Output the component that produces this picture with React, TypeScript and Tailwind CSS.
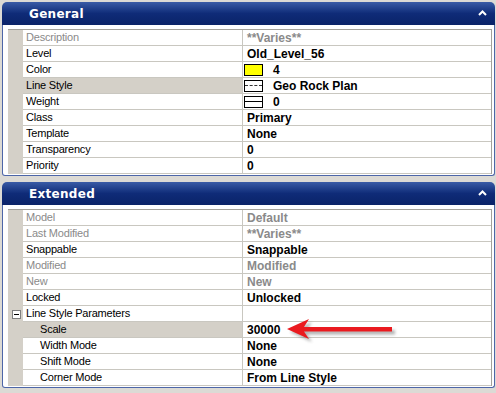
import React from 'react'

type Row = {
  label: string
  value?: string
  dim?: boolean
  selected?: boolean
  icon?: 'color' | 'dash' | 'solid'
  sub?: boolean
  group?: boolean
}

const general: Row[] = [
  { label: 'Description', value: '**Varies**', dim: true },
  { label: 'Level', value: 'Old_Level_56' },
  { label: 'Color', value: '4', icon: 'color' },
  { label: 'Line Style', value: 'Geo Rock Plan', icon: 'dash', selected: true },
  { label: 'Weight', value: '0', icon: 'solid' },
  { label: 'Class', value: 'Primary' },
  { label: 'Template', value: 'None' },
  { label: 'Transparency', value: '0' },
  { label: 'Priority', value: '0' },
]

const extended: Row[] = [
  { label: 'Model', value: 'Default', dim: true },
  { label: 'Last Modified', value: '**Varies**', dim: true },
  { label: 'Snappable', value: 'Snappable' },
  { label: 'Modified', value: 'Modified', dim: true },
  { label: 'New', value: 'New', dim: true },
  { label: 'Locked', value: 'Unlocked' },
  { label: 'Line Style Parameters', group: true },
  { label: 'Scale', value: '30000', sub: true, selected: true },
  { label: 'Width Mode', value: 'None', sub: true },
  { label: 'Shift Mode', value: 'None', sub: true },
  { label: 'Corner Mode', value: 'From Line Style', sub: true },
]

// ─── Little swatches in the value column ─────────────────────────
function ValueIcon({ kind }: { kind: Row['icon'] }) {
  if (kind === 'color') {
    return <span className="w-[19px] h-[12px] border border-black bg-[#ffff00] shrink-0" />
  }
  return (
    <span className="w-[19px] h-[12px] border border-black bg-white shrink-0 flex items-center">
      <span
        className={
          kind === 'dash'
            ? 'w-full border-t border-dashed border-[#333]'
            : 'w-full border-t border-black'
        }
      />
    </span>
  )
}

function PropRow({ row }: { row: Row }) {
  return (
    <div className="flex h-[16px]">
      {/* indent gutter */}
      <div className="w-[15px] shrink-0 bg-[#d4d0c8] flex items-center justify-center">
        {row.group && (
          <span className="w-[9px] h-[9px] border border-[#7f7f7f] bg-white flex items-center justify-center ml-[1px]">
            <span className="w-[5px] h-px bg-black" />
          </span>
        )}
      </div>
      <div
        className={
          'w-[220px] shrink-0 border-b border-r border-[#c9c7c0] flex items-center tracking-[-0.2px] text-[11px] ' +
          (row.selected ? 'bg-[#d4d0c8] ' : 'bg-white ') +
          (row.dim ? 'text-[#8a8a8a] ' : 'text-black ') +
          (row.sub ? 'pl-[17px]' : 'pl-[3px]')
        }
      >
        {row.label}
      </div>
      <div
        className={
          'flex-1 border-b border-[#c9c7c0] bg-white flex items-center font-bold text-[12px] ' +
          (row.dim ? 'text-[#8a8a8a] ' : 'text-black ') +
          (row.icon ? 'pl-[1px] gap-[10px]' : 'pl-[4px]')
        }
      >
        {row.icon && <ValueIcon kind={row.icon} />}
        {row.value}
      </div>
    </div>
  )
}

function Panel({ title, rows, className }: { title: string; rows: Row[]; className?: string }) {
  return (
    <div className={'ml-[2px] w-[493px] ' + (className ?? '')}>
      <div className="h-[23px] rounded-t-[5px] bg-linear-to-b from-[#3a5ba6] via-[#0f2b78] to-[#0a2368] flex items-center justify-between pl-[27px] pr-[8px]">
        <span className="text-white font-bold text-[12px] tracking-[0.3px] font-['DejaVu_Sans',sans-serif]">
          {title}
        </span>
        <svg width="9" height="6" viewBox="0 0 9 6" className="mb-[1px]">
          <path d="M1 5 L4.5 1.5 L8 5" stroke="white" strokeWidth="2" fill="none" />
        </svg>
      </div>
      <div className="border-x border-b border-[#4d66a8] rounded-b-[3px] bg-white pt-[4px] pl-[5px] pr-[2px] pb-[1px]">
        <div className="border-t border-r border-[#a3a19a]">
          {rows.map((r) => (
            <PropRow key={r.label} row={r} />
          ))}
        </div>
      </div>
    </div>
  )
}

export default function App() {
  return (
    <div className="relative w-[496px] h-[393px] bg-[#dcdad5] pt-[2px] overflow-hidden font-['Liberation_Sans',Arial,sans-serif]">
      <Panel title="General" rows={general} />
      <Panel title="Extended" rows={extended} className="mt-[6px]" />

      {/* red callout arrow */}
      <svg width="116" height="28" viewBox="0 0 116 28" className="absolute left-[285px] top-[317px]">
        <defs>
          <filter id="sh" x="-10%" y="-40%" width="130%" height="190%">
            <feGaussianBlur stdDeviation="1.5" />
          </filter>
        </defs>
        <path
          d="M2 12 L24 2 L19 10 L107 10 L107 14.5 L19 14.5 L24 22 Z"
          fill="#555"
          opacity="0.45"
          transform="translate(3 3)"
          filter="url(#sh)"
        />
        <path d="M2 12 L24 2 L19 10 L107 10 L107 14.5 L19 14.5 L24 22 Z" fill="#ea1a1f" />
      </svg>
    </div>
  )
}
